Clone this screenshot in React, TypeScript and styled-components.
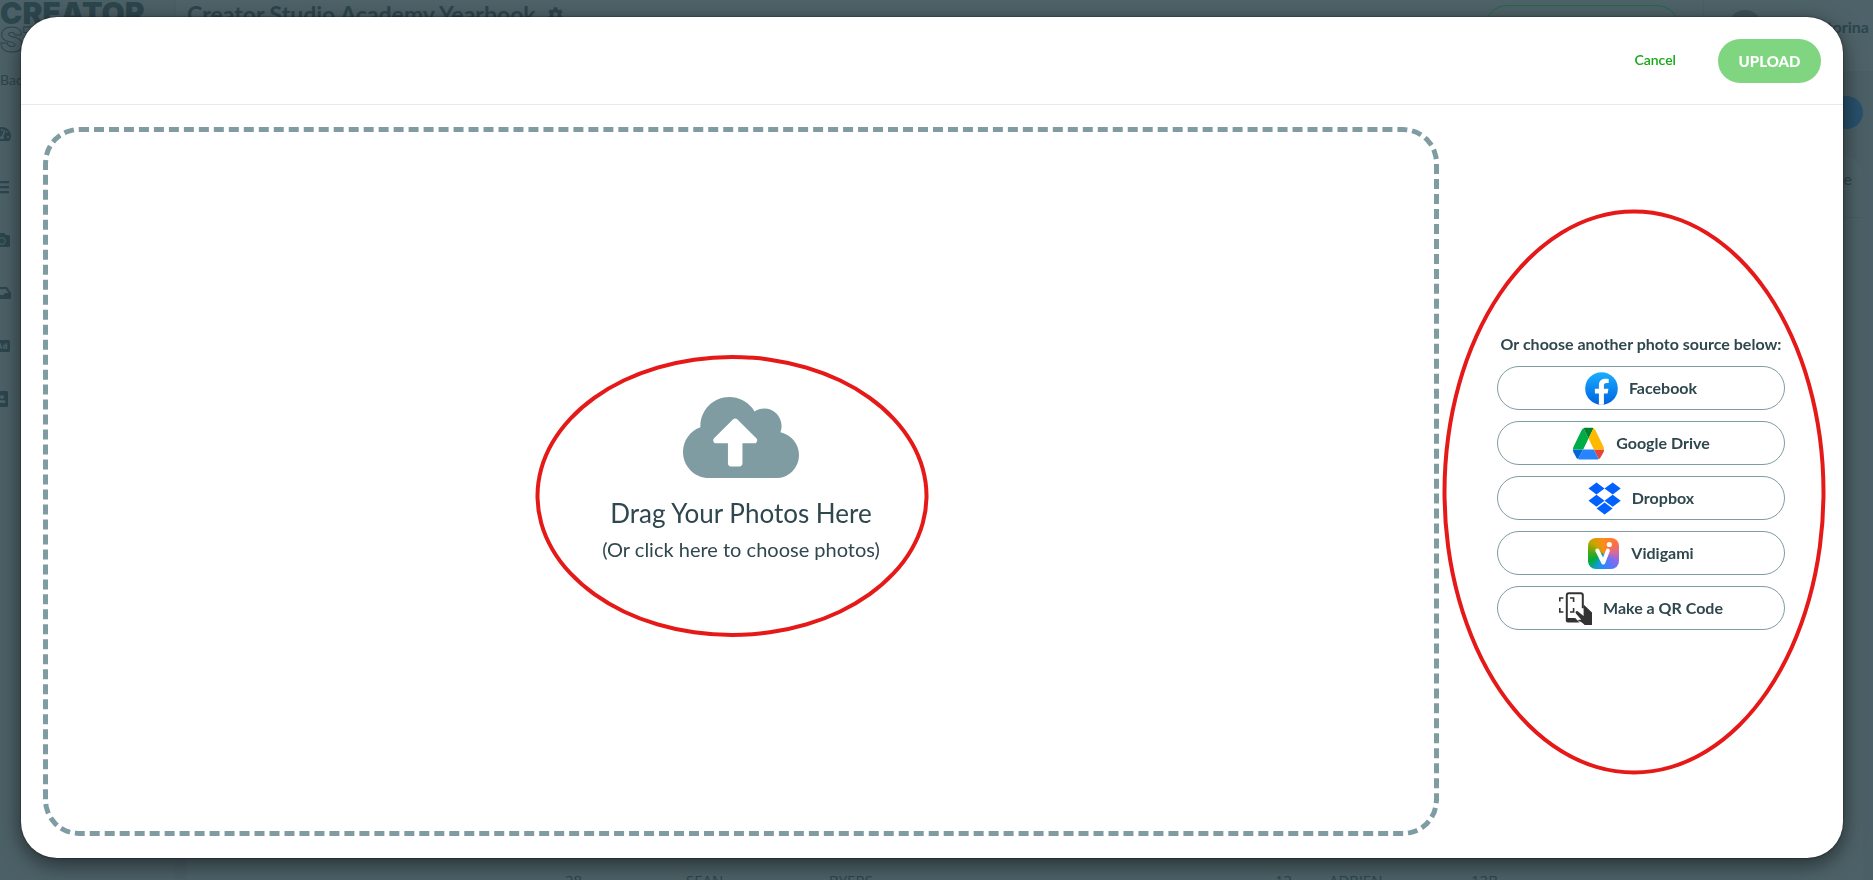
import React from "react";
import styled, { createGlobalStyle } from "styled-components";
import {
  FaAd,
  FaBars,
  FaCamera,
  FaCloudUploadAlt,
  FaCog,
  FaInbox,
  FaPortrait,
  FaTachometerAlt,
} from "react-icons/fa";

const color = {
  page: "#4e6369",
  sidebar: "#4c6167",
  line: "#4a5f65",
  dim: "#2c464d",
  ink: "#2f474e",
  slate: "#7f9ca2",
  green: "#13aa13",
  upload: "#80d680",
  mark: "#e61919",
};

const Global = createGlobalStyle`
  *, *::before, *::after { box-sizing: border-box; }
  html, body, #root { height: 100%; }
  body {
    margin: 0;
    overflow: hidden;
    background: ${color.page};
    color: ${color.ink};
    font-family: Lato, "Open Sans", sans-serif;
    font-size: 16px;
  }
  button { font: inherit; color: inherit; cursor: pointer; }
`;

/* ---------- page behind the dialog ---------- */

const Page = styled.div`
  display: flex;
  height: 100%;
  color: ${color.dim};
  overflow: hidden;
`;

const Sidebar = styled.aside`
  flex: none;
  width: 176px;
  border-right: 1px solid ${color.line};
  background: ${color.sidebar};
`;

const Logo = styled.div`
  height: 56px;
  font-family: Inter, sans-serif;
  font-size: 30px;
  line-height: 26px;
  font-weight: 900;
`;

const LogoOutline = styled.div`
  color: transparent;
  font-size: 34px;
  line-height: 28px;
  -webkit-text-stroke: 1px ${color.dim};
`;

const BackLink = styled.a`
  display: block;
  padding-top: 14px;
  font-size: 14px;
  line-height: 20px;
  color: inherit;
  text-decoration: none;
`;

const Nav = styled.nav`
  display: grid;
  gap: 37px;
  margin: 36px 0 0 -8px;

  a { display: flex; color: inherit; }
  svg { width: 20px; height: 16px; }
`;

const Main = styled.main`
  flex: 1;
  min-width: 0;
  display: flex;
  flex-direction: column;
`;

const TopBar = styled.header`
  display: flex;
  align-items: center;
  height: 71px;
  padding: 0 4px 0 11px;
  background: ${color.page};
`;

const BookTitle = styled.h1`
  display: flex;
  align-items: center;
  gap: 12px;
  align-self: flex-start;
  margin: 0;
  font-size: 23px;
  line-height: 28px;
  font-weight: 700;

  svg { font-size: 15px; }
`;

const OutlinePill = styled.button`
  align-self: flex-start;
  width: 194px;
  height: 44px;
  margin: 5px 24px 0 auto;
  border: 1px solid #1f6b48;
  border-radius: 22px;
  background: transparent;
`;

const Account = styled.div`
  display: flex;
  align-items: center;
  align-self: stretch;
  justify-content: space-between;
  width: 166px;
  padding: 0 0 18px 24px;
  border-left: 1px solid ${color.line};
  font-weight: 700;
`;

const Avatar = styled.span`
  width: 34px;
  height: 34px;
  border-radius: 50%;
  background: #3c5359;
`;

const Content = styled.div`
  flex: 1;
  display: flex;
  flex-direction: column;
  align-items: flex-end;
  padding: 25px 10px 0 11px;
  background: #4b5f66;
`;

const BluePill = styled.button`
  width: 140px;
  height: 33px;
  border: 0;
  border-radius: 17px;
  background: #28506c;
`;

const Panel = styled.section`
  flex: 1;
  align-self: stretch;
  display: flex;
  flex-direction: column;
  margin-top: 26px;
  border-radius: 20px 20px 0 0;
  background: #4d6268;
`;

const PanelHead = styled.div`
  padding: 14px 11px 0 0;
  height: 63px;
  border-bottom: 1px solid #485d63;
  text-align: right;
  line-height: 20px;
`;

const People = styled.table`
  width: 100%;
  margin-top: auto;
  table-layout: fixed;
  border-collapse: collapse;
  font-family: "Open Sans", sans-serif;
  font-size: 15px;

  td { padding: 0; line-height: 18px; vertical-align: top; }
`;

const Clip = styled.div`
  height: 9px;
  overflow: hidden;
`;

/* ---------- dialog ---------- */

const Backdrop = styled.div`
  position: fixed;
  inset: 0;
  display: flex;
  padding: 17px 30px 22px 21px;
`;

const Dialog = styled.section`
  flex: 1;
  display: flex;
  flex-direction: column;
  border-radius: 36px;
  background: #fff;
  box-shadow: 0 6px 22px rgba(0, 0, 0, 0.55), 0 0 2px rgba(0, 0, 0, 0.7);
`;

const DialogBar = styled.header`
  display: flex;
  align-items: center;
  justify-content: flex-end;
  gap: 32px;
  height: 88px;
  padding: 0 22px;
  border-bottom: 1px solid #e8eaea;
`;

const CancelButton = styled.button`
  padding: 0 10px 2px;
  border: 0;
  background: none;
  color: ${color.green};
  font-size: 14px;
  line-height: 20px;
  font-weight: 600;
`;

const UploadButton = styled.button`
  width: 103px;
  height: 44px;
  padding: 0;
  border: 0;
  border-radius: 22px;
  background: ${color.upload};
  color: #fff;
  font-size: 15px;
  font-weight: 900;
`;

const DialogBody = styled.div`
  flex: 1;
  display: flex;
`;

const DropArea = styled.div`
  position: relative;
  flex: 1;
  display: flex;
  margin: 22px 0 22px 22px;
`;

const DropZone = styled.button`
  flex: 1;
  display: flex;
  flex-direction: column;
  align-items: center;
  justify-content: center;
  padding: 0 0 10px;
  border: 5px dashed ${color.slate};
  border-radius: 36px;
  background: none;

  svg { width: 116px; height: 93px; color: ${color.slate}; }
`;

const DropTitle = styled.span`
  margin-top: 11px;
  font-size: 26px;
  line-height: 36px;
`;

const DropHint = styled.span`
  margin-top: 4px;
  font-size: 20px;
  line-height: 28px;
`;

const Sources = styled.aside`
  position: relative;
  width: 404px;
  display: flex;
  flex-direction: column;
  justify-content: center;
  gap: 11px;
  padding: 0 58px;
  font-weight: 700;
`;

const SourcesTitle = styled.h2`
  margin: 0;
  font-size: 16px;
  line-height: 22px;
  text-align: center;
  white-space: nowrap;
`;

const SourceButton = styled.button`
  display: flex;
  align-items: center;
  justify-content: center;
  gap: 11px;
  height: 44px;
  border: 1px solid ${color.slate};
  border-radius: 22px;
  background: #fff;

  svg { width: 33px; height: 33px; }
`;

const SourceLabel = styled.span`
  padding-bottom: 2px;
`;

const Ring = styled.span<{ $w: number; $h: number; $x: number; $y: number }>`
  position: absolute;
  top: calc(50% + ${(p) => p.$y}px);
  left: calc(50% + ${(p) => p.$x}px);
  width: ${(p) => p.$w}px;
  height: ${(p) => p.$h}px;
  transform: translate(-50%, -50%);
  border: 4px solid ${color.mark};
  border-radius: 50%;
  pointer-events: none;
`;

/* ---------- brand marks ---------- */

const FacebookMark = () => (
  <svg viewBox="0 0 33 33" aria-hidden="true">
    <defs>
      <linearGradient id="fb" x1="0" y1="0" x2="0" y2="1">
        <stop offset="0" stopColor="#19aeff" />
        <stop offset="1" stopColor="#0062e0" />
      </linearGradient>
    </defs>
    <circle cx="16.500" cy="16.500" r="16.300" fill="url(#fb)" />
    <path
      fill="#fff"
      d="M13.900 32.600V21.400H9.900v-4.700h4v-3.500c0-4.200 2.500-6.400 6.200-6.400 1.300 0 2.600.1 3.600.3v4h-2c-2.200 0-2.800 1.200-2.800 2.600v3h4.500l-.8 4.700h-3.700v11.200a16 16 0 0 1-5 0z"
    />
  </svg>
);

const DriveMark = () => (
  <svg viewBox="0 0 33 33" aria-hidden="true">
    <path fill="#0066da" d="M1 22.500h10.200L6 32c-.8-.4-1.300-.9-1.700-1.600L1.500 25.200c-.4-.8-.6-1.700-.5-2.700z" />
    <path fill="#00ac47" d="M16.500 11.500 11.500 1.200c-.8.400-1.400 1-1.800 1.700L1.500 19.800c-.4.800-.5 1.800-.5 2.700h10.200z" />
    <path fill="#ea4335" d="M26.800 32c.8-.4 1.300-.9 1.700-1.600l3-5.200c.4-.8.600-1.700.5-2.700H21.800z" />
    <path fill="#00832d" d="M16.500 11.500 21.500 1.200c-.8-.4-1.500-.5-2.500-.5h-5c-1 0-1.700.1-2.500.5z" />
    <path fill="#2684fc" d="M21.800 22.500H11.200L6 32c.8.400 1.500.5 2.500.5h15.800c1 0 1.700-.1 2.500-.5z" />
    <path fill="#ffba00" d="M31.500 19.800 23.300 2.900c-.4-.7-1-1.300-1.800-1.700l-5 10.300 5.300 11H32c0-.9-.1-1.900-.5-2.700z" />
  </svg>
);

const DropboxMark = () => (
  <svg viewBox="0 0 33 33" aria-hidden="true">
    <path
      fill="#0061ff"
      d="m8.500.5 8 6-8 6-8-6zM24.700.5l8 6-8 6-8.200-6zM8.500 12.700l8 6-8 6-8-6zM24.700 12.700l8 6-8 6-8.200-6zM16.600 20.600l8 6-8 6-8-6z"
    />
  </svg>
);

const VidigamiIcon = styled.span`
  display: flex;
  width: 31px;
  height: 31px;
  margin-right: 1px;
  border-radius: 8px;
  background: conic-gradient(
    from 0deg,
    #ff8c1a,
    #ff7040 50deg,
    #d86a9c 85deg,
    #7d6cf2 125deg,
    #2f86ff 175deg,
    #0f9cd8 205deg,
    #00ab3c 240deg,
    #3ba91a 270deg,
    #c9a400 315deg,
    #ff8c1a
  );

  svg { width: 31px; height: 31px; }
`;

const VidigamiMark = () => (
  <VidigamiIcon>
    <svg viewBox="0 0 31 31" aria-hidden="true">
      <path d="m9.300 12.500 6 12 4.600-12" fill="none" stroke="#fff" strokeWidth="4" strokeLinecap="round" strokeLinejoin="round" />
      <circle cx="21.300" cy="6.500" r="2.600" fill="#fff" />
    </svg>
  </VidigamiIcon>
);

const QrMark = () => (
  <svg viewBox="0 0 33 33" aria-hidden="true">
    <g fill="none" stroke="#333" strokeWidth="1.600">
      <path d="M.8 9.500V6h3.600M.8 16v4h3.600M11 6h3.600v4M11 20h3.600v-4" />
      <path d="M7.800 26V3.200c0-1.200.8-2 2-2h12c1.200 0 2 .8 2 2v13" strokeWidth="2" />
    </g>
    <path
      fill="#333"
      d="M6.800 26h9.400l4.300 4.500H9c-1.400 0-2.200-.8-2.200-2zM24.600 12.500l8.400 8V33h-7.300c-1.800-1.900-3.500-3.300-6-4-.9-.3-.6-1.300.4-1.300h2.200l-5.400-6.200c-1.200-1.500.7-3.200 2.100-2l5.600 4.600z"
    />
  </svg>
);

const sources = [
  { label: "Facebook", Mark: FacebookMark },
  { label: "Google Drive", Mark: DriveMark },
  { label: "Dropbox", Mark: DropboxMark },
  { label: "Vidigami", Mark: VidigamiMark },
  { label: "Make a QR Code", Mark: QrMark },
];

const navIcons = [
  { label: "Dashboard", Icon: FaTachometerAlt },
  { label: "Ladder", Icon: FaBars },
  { label: "Photos", Icon: FaCamera },
  { label: "Inbox", Icon: FaInbox },
  { label: "Ads", Icon: FaAd },
  { label: "Portraits", Icon: FaPortrait },
];

const people = [
  { text: "", width: "378px" },
  { text: "28", width: "121px" },
  { text: "SEAN", width: "143px" },
  { text: "BYERS", width: "446px" },
  { text: "12", width: "54px" },
  { text: "ADRIEN", width: "142px" },
  { text: "12B", width: "auto" },
];

const Cell = styled.td<{ $width: string }>`
  width: ${(p) => p.$width};
`;

export default function App() {
  return (
    <>
      <Global />
      <Page aria-hidden="true">
        <Sidebar>
          <Logo>
            CREATOR
            <LogoOutline>STUDIO</LogoOutline>
          </Logo>
          <BackLink href="#">Back</BackLink>
          <Nav>
            {navIcons.map(({ label, Icon }) => (
              <a key={label} href="#" aria-label={label}>
                <Icon />
              </a>
            ))}
          </Nav>
        </Sidebar>
        <Main>
          <TopBar>
            <BookTitle>
              Creator Studio Academy Yearbook
              <FaCog />
            </BookTitle>
            <OutlinePill aria-label="Preview" />
            <Account>
              <Avatar />
              torina
            </Account>
          </TopBar>
          <Content>
            <BluePill aria-label="Add" />
            <Panel>
              <PanelHead>e</PanelHead>
              <People>
                <tbody>
                  <tr>
                    {people.map(({ text, width }, i) => (
                      <Cell key={i} $width={width}>
                        <Clip>{text}</Clip>
                      </Cell>
                    ))}
                  </tr>
                </tbody>
              </People>
            </Panel>
          </Content>
        </Main>
      </Page>

      <Backdrop>
        <Dialog role="dialog" aria-modal="true" aria-label="Upload photos">
          <DialogBar>
            <CancelButton type="button">Cancel</CancelButton>
            <UploadButton type="button">UPLOAD</UploadButton>
          </DialogBar>
          <DialogBody>
            <DropArea>
              <DropZone type="button">
                <FaCloudUploadAlt />
                <DropTitle>Drag Your Photos Here</DropTitle>
                <DropHint>(Or click here to choose photos)</DropHint>
              </DropZone>
              <Ring $w={393} $h={282} $x={-9} $y={14} />
            </DropArea>
            <Sources>
              <SourcesTitle>Or choose another photo source below:</SourcesTitle>
              {sources.map(({ label, Mark }) => (
                <SourceButton key={label} type="button">
                  <Mark />
                  <SourceLabel>{label}</SourceLabel>
                </SourceButton>
              ))}
              <Ring $w={383} $h={565} $x={-7} $y={10} />
            </Sources>
          </DialogBody>
        </Dialog>
      </Backdrop>
    </>
  );
}
